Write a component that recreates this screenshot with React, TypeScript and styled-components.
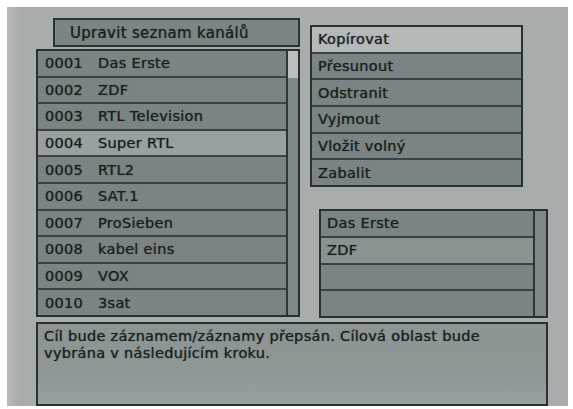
import React from "react";
import styled, { createGlobalStyle } from "styled-components";

const Global = createGlobalStyle`
  html, body { margin: 0; padding: 0; background: #ffffff; }
  body { font-family: "DejaVu Sans", "Liberation Sans", sans-serif; }
  * { box-sizing: border-box; }
`;

const Screen = styled.div`
  margin: 7px 0 0 7px;
  width: 561px;
  height: 399px;
  background: linear-gradient(90deg, #b9bdbd 0px, #aeb2b2 6px, #a8acac 14px, #a8acac 100%);
  padding: 11px 0 0 29px;
  display: flex;
  flex-direction: column;
  color: #1a1f1f;
  font-size: 14.5px;
  letter-spacing: 0.3px;
  text-shadow: 0 0 1px rgba(20, 26, 26, 0.7);
`;

const Top = styled.div`
  display: flex;
  gap: 10px;
`;

const LeftCol = styled.div`
  width: 264px;
  display: flex;
  flex-direction: column;
  gap: 2px;
`;

const Title = styled.div`
  margin-left: 17px;
  height: 29px;
  border: 2px solid #2c3232;
  background: #7c8585;
  display: flex;
  align-items: center;
  padding-left: 15px;
  font-size: 15px;
`;

const ListFrame = styled.div`
  height: 268px;
  border: 2px solid #2a3030;
  display: flex;
  background: #7c8585;
`;

const Rows = styled.div`
  flex: 1;
  display: flex;
  flex-direction: column;
  border-right: 2px solid #2f3535;
`;

const Row = styled.div<{ $hl?: boolean; $last?: boolean }>`
  flex: 1;
  display: flex;
  align-items: center;
  padding-left: 7px;
  background: ${(p) => (p.$hl ? "#99a0a2" : "#7b8484")};
  border-bottom: ${(p) => (p.$last ? "none" : "2px solid #3a4242")};
  white-space: nowrap;
`;

const Num = styled.span`
  width: 53px;
  flex: none;
`;

const Track = styled.div`
  width: 10px;
  background: #7f8888;
  display: flex;
  flex-direction: column;
`;

const Thumb = styled.div`
  height: 27px;
  background: #b9bebe;
`;

const RightCol = styled.div`
  padding-top: 7px;
  display: flex;
  flex-direction: column;
`;

const Menu = styled.div`
  width: 213px;
  height: 162px;
  border: 2px solid #2a3030;
  display: flex;
  flex-direction: column;
`;

const MenuItem = styled.div<{ $hl?: boolean; $last?: boolean }>`
  flex: 1;
  display: flex;
  align-items: center;
  padding-left: 6px;
  background: ${(p) => (p.$hl ? "#b5b9ba" : "#7b8484")};
  border-bottom: ${(p) => (p.$last ? "none" : "2px solid #3a4242")};
`;

const TargetBox = styled.div`
  margin: 22px 0 0 9px;
  width: 229px;
  height: 109px;
  border: 2px solid #2a3030;
  display: flex;
  background: #7c8585;
`;

const TargetRows = styled.div`
  flex: 1;
  display: flex;
  flex-direction: column;
  border-right: 2px solid #2f3535;
`;

const TargetRow = styled.div<{ $hl?: boolean; $last?: boolean }>`
  flex: 1;
  display: flex;
  align-items: center;
  padding-left: 6px;
  background: ${(p) => (p.$hl ? "#8b9292" : "#7b8484")};
  border-bottom: ${(p) => (p.$last ? "none" : "2px solid #3a4242")};
`;

const TargetTrack = styled.div`
  width: 11px;
  background: #7f8888;
`;

const Message = styled.div`
  margin-top: 4px;
  width: 512px;
  height: 84px;
  border: 2px solid #2a3030;
  background: linear-gradient(180deg, #8c9494 0%, #8e9696 60%, #98a0a1 100%);
  padding: 4px 6px;
  line-height: 17px;
`;

const channels = [
  ["0001", "Das Erste"],
  ["0002", "ZDF"],
  ["0003", "RTL Television"],
  ["0004", "Super RTL"],
  ["0005", "RTL2"],
  ["0006", "SAT.1"],
  ["0007", "ProSieben"],
  ["0008", "kabel eins"],
  ["0009", "VOX"],
  ["0010", "3sat"],
];

const menu = ["Kopírovat", "Přesunout", "Odstranit", "Vyjmout", "Vložit volný", "Zabalit"];
const targets = ["Das Erste", "ZDF", "", ""];

export default function App() {
  return (
    <>
      <Global />
      <Screen>
        <Top>
          <LeftCol>
            <Title>Upravit seznam kanálů</Title>
            <ListFrame>
              <Rows>
                {channels.map(([n, name], i) => (
                  <Row key={n} $hl={i === 3} $last={i === channels.length - 1}>
                    <Num>{n}</Num>
                    {name}
                  </Row>
                ))}
              </Rows>
              <Track>
                <Thumb />
              </Track>
            </ListFrame>
          </LeftCol>
          <RightCol>
            <Menu>
              {menu.map((m, i) => (
                <MenuItem key={m} $hl={i === 0} $last={i === menu.length - 1}>
                  {m}
                </MenuItem>
              ))}
            </Menu>
            <TargetBox>
              <TargetRows>
                {targets.map((t, i) => (
                  <TargetRow key={i} $hl={i === 1} $last={i === targets.length - 1}>
                    {t}
                  </TargetRow>
                ))}
              </TargetRows>
              <TargetTrack />
            </TargetBox>
          </RightCol>
        </Top>
        <Message>
          Cíl bude záznamem/záznamy přepsán. Cílová oblast bude vybrána v následujícím kroku.
        </Message>
      </Screen>
    </>
  );
}
